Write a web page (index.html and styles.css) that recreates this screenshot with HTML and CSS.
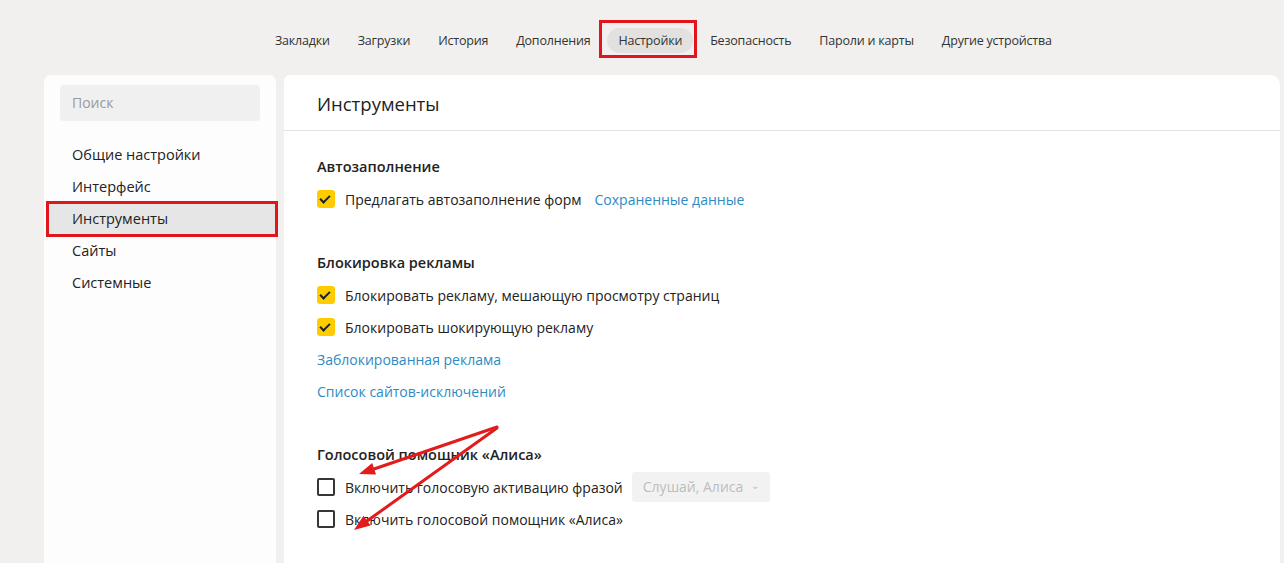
FILE: index.html
```html
<!DOCTYPE html>
<html>
<head>
  <title>Настройки</title>
  <meta charset="UTF-8">
  <link rel="stylesheet" href="styles.css">
</head>
<body>
  <div class="topnav">
    <a class="nav-item">Закладки</a>
    <a class="nav-item">Загрузки</a>
    <a class="nav-item">История</a>
    <a class="nav-item">Дополнения</a>
    <a class="nav-item active marked">Настройки</a>
    <a class="nav-item">Безопасность</a>
    <a class="nav-item">Пароли и карты</a>
    <a class="nav-item">Другие устройства</a>
  </div>

  <div class="layout">
    <div class="sidebar">
      <div class="search">Поиск</div>
      <div class="menu">
        <div class="menu-item">Общие настройки</div>
        <div class="menu-item">Интерфейс</div>
        <div class="menu-item active marked">Инструменты</div>
        <div class="menu-item">Сайты</div>
        <div class="menu-item">Системные</div>
      </div>
    </div>

    <div class="main">
      <div class="main-header">Инструменты</div>
      <div class="main-body">
        <div class="section">
          <div class="section-title">Автозаполнение</div>
          <div class="row">
            <span class="check checked"></span>
            <span>Предлагать автозаполнение форм</span>
            <a class="link inline">Сохраненные данные</a>
          </div>
        </div>

        <div class="section">
          <div class="section-title">Блокировка рекламы</div>
          <div class="row">
            <span class="check checked"></span>
            <span>Блокировать рекламу, мешающую просмотру страниц</span>
          </div>
          <div class="row">
            <span class="check checked"></span>
            <span>Блокировать шокирующую рекламу</span>
          </div>
          <div class="row"><a class="link">Заблокированная реклама</a></div>
          <div class="row"><a class="link">Список сайтов-исключений</a></div>
        </div>

        <div class="section">
          <div class="section-title">Голосовой помощник «Алиса»</div>
          <div class="row">
            <span class="check"></span>
            <span>Включить голосовую активацию фразой</span>
            <span class="select">Слушай, Алиса <span class="chevron">&#8964;</span></span>
          </div>
          <div class="row">
            <span class="check"></span>
            <span>Включить голосовой помощник «Алиса»</span>
          </div>
        </div>
      </div>
    </div>
  </div>

  <!-- стрелки-пометки поверх страницы -->
  <svg class="annotations" width="1284" height="563" viewBox="0 0 1284 563">
    <line x1="497" y1="427" x2="374" y2="469" stroke="#e31b1b" stroke-width="3" stroke-linecap="round"/>
    <polygon points="359,474 376,474.5 372.2,463.1" fill="#e31b1b"/>
    <line x1="497" y1="428" x2="367" y2="521" stroke="#e31b1b" stroke-width="3" stroke-linecap="round"/>
    <polygon points="354,530 370.5,525.6 363.5,515.8" fill="#e31b1b"/>
  </svg>
</body>
</html>
```

FILE: styles.css
```css
body {
  margin: 0;
  height: 563px;
  overflow: hidden;
  background-color: #f2f0ee;
  font-family: "Open Sans", "Noto Sans", Arial, sans-serif;
  font-size: 14px;
  color: #222;
  position: relative;
}
a {
  cursor: pointer;
}
.topnav {
  display: flex;
  align-items: center;
  height: 75px;
  padding-left: 264px;
  padding-top: 5px;
  box-sizing: border-box;
}
.nav-item {
  font-size: 12.5px;
  color: #333;
  padding: 4px 11px;
  margin-right: 6px;
  border-radius: 13px;
  position: relative;
  letter-spacing: -0.2px;
}
.nav-item.active {
  background-color: #e3e1df;
}
.menu-item.marked {
  outline: 3px solid #e0161c;
  outline-offset: -1px;
}
.nav-item.marked::after {
  content: "";
  position: absolute;
  left: -8px;
  right: -4px;
  top: -8px;
  bottom: -5px;
  border: 3px solid #e0161c;
}
.layout {
  display: flex;
  gap: 8px;
  padding: 0 4px 0 44px;
  height: 488px;
}
.sidebar {
  width: 232px;
  background-color: #fdfdfd;
  border-radius: 6px 6px 0 0;
  padding-top: 10px;
}
.search {
  margin: 0 16px;
  height: 36px;
  line-height: 36px;
  padding-left: 12px;
  background-color: #f0f0f0;
  border-radius: 4px;
  color: #9a9a9a;
}
.menu {
  margin-top: 18px;
}
.menu-item {
  height: 32px;
  line-height: 32px;
  margin-left: 4px;
  padding-left: 24px;
  font-size: 14.5px;
}
.menu-item.active {
  background-color: #e6e6e6;
}
.main {
  flex: 1;
  background-color: #fff;
  border-radius: 6px 10px 0 0;
}
.main-header {
  height: 55px;
  line-height: 58px;
  padding-left: 33px;
  font-size: 18.5px;
  border-bottom: 1px solid #e3e3e3;
}
.main-body {
  padding: 25px 33px 0;
}
.section {
  margin-bottom: 37px;
}
.section-title {
  font-weight: 600;
  font-size: 14.5px;
  height: 22px;
  line-height: 22px;
  margin-bottom: 5px;
}
.row {
  display: flex;
  align-items: center;
  height: 32px;
}
.check {
  width: 18px;
  height: 18px;
  box-sizing: border-box;
  border: 2px solid #363636;
  border-radius: 2px;
  margin-right: 10px;
  flex-shrink: 0;
  position: relative;
}
.check.checked {
  border: none;
  border-radius: 3px;
  background-color: #ffcc00;
}
.check.checked::after {
  content: "";
  position: absolute;
  left: 5px;
  top: 3px;
  width: 4px;
  height: 8px;
  border: solid #222;
  border-width: 0 2px 2px 0;
  transform: rotate(45deg);
}
.link {
  color: #2d8bc4;
}
.link.inline {
  margin-left: 13px;
}
.select {
  margin-left: 9px;
  height: 30px;
  line-height: 30px;
  padding: 0 11px;
  background-color: #f2f2f2;
  border-radius: 3px;
  color: #bdbdbd;
}
.chevron {
  font-size: 10px;
  margin-left: 4px;
  position: relative;
  top: -3px;
}
.annotations {
  position: absolute;
  left: 0;
  top: 0;
  pointer-events: none;
}
```
